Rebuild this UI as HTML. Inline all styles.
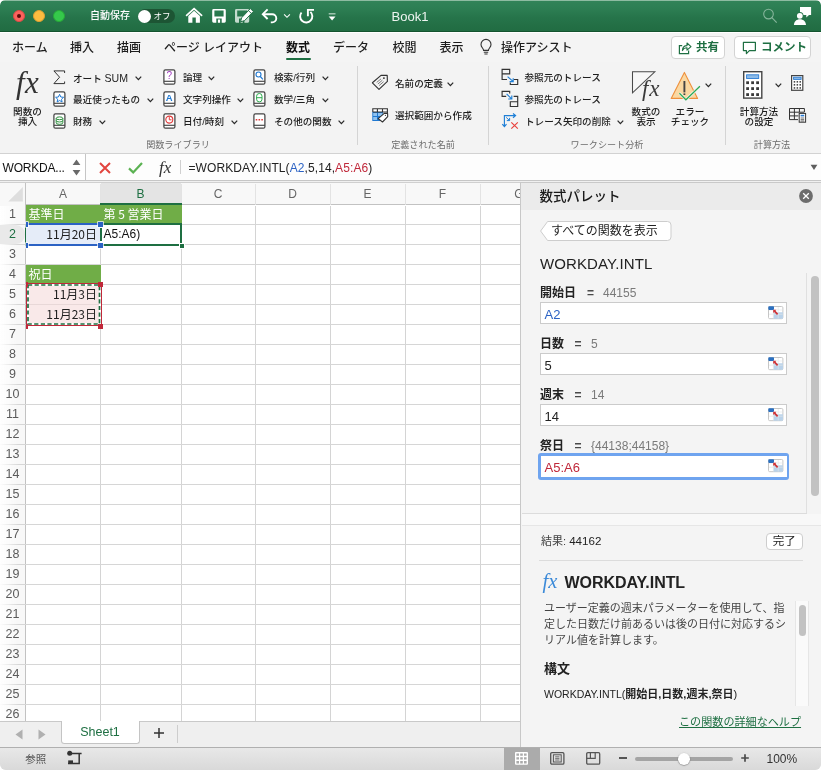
<!DOCTYPE html>
<html lang="ja"><head><meta charset="utf-8"><title>Book1</title>
<style>
*{box-sizing:border-box;margin:0;padding:0}
html{background:#fff}html,body{width:821px;height:770px;overflow:hidden}body{background:#f2f2f2;border-radius:5px 5px 6px 6px}
body{font-family:"Liberation Sans","Noto Sans CJK JP",sans-serif;color:#222;position:relative;font-size:12px}
.abs{position:absolute}
.t{position:absolute;white-space:nowrap;line-height:1}
svg{position:absolute;overflow:visible}
/* title bar */
#title{left:0;top:0;width:821px;height:32px;background:linear-gradient(#8dbba1 0,#8dbba1 1px,#318358 1px,#2c7d52 30%,#26744a 55%,#216c42 96%,#14532f 97%,#14532f 100%);border-radius:5px 5px 0 0}
.tl{position:absolute;top:10px;width:12px;height:12px;border-radius:50%}
#tabs{left:0;top:32px;width:821px;height:30px;background:#f4f4f4;border-top:1px solid #fff}
.tab{font-size:12px;color:#1e1e1e;top:41.5px;font-weight:500}
#ribbon{left:0;top:62px;width:821px;height:92px;background:#f3f3f3;border-bottom:1px solid #d2d2d2}
.rl{font-size:9.6px;color:#1e1e1e;font-weight:500}
.gl{font-size:9.1px;color:#6c6c6c;top:140.6px}
.sep{position:absolute;top:66px;width:1px;height:79px;background:#d4d4d4}
</style></head><body><div id="w" style="position:absolute;left:0;top:0;width:821px;height:770px;will-change:transform">
<div id="title" class="abs">
<div class="tl" style="left:13px;background:#fc625d;border:0.5px solid #dd4a45"></div>
<div class="abs" style="left:17px;top:14px;width:4px;height:4px;border-radius:50%;background:#5c0a0a"></div>
<div class="tl" style="left:33px;background:#fdbc40;border:0.5px solid #dea032"></div>
<div class="tl" style="left:53px;background:#35c84b;border:0.5px solid #27a938"></div>
<div class="t" style="left:90px;top:11px;font-size:10px;color:#fff;font-weight:500">自動保存</div>
<div class="abs" style="left:138px;top:9px;width:37px;height:14px;border-radius:7px;background:#1d5534"></div>
<div class="abs" style="left:138px;top:9.5px;width:13px;height:13px;border-radius:50%;background:#fff"></div>
<div class="t" style="left:153.5px;top:12px;font-size:8.5px;color:#fff">オフ</div>
<svg style="left:180px;top:2px" width="160" height="28" viewBox="180 2 160 28">
<path d="M186.6 15.4 L194.1 8.6 L201.6 15.4" fill="none" stroke="#fff" stroke-width="1.7" stroke-linecap="round" stroke-linejoin="miter"/>
<path d="M188.3 15.9 L194.1 10.7 L199.9 15.9 V22.7 H195.8 V17.6 H192.4 V22.7 H188.3 Z" fill="#fff"/>
<path d="M213.6 9 H224.4 A1.4 1.4 0 0 1 225.8 10.4 V21.3 A1.4 1.4 0 0 1 224.4 22.7 H213.6 A1.4 1.4 0 0 1 212.2 21.3 V10.4 A1.4 1.4 0 0 1 213.6 9 Z M214.4 10.6 V16.6 H223.6 V10.6 Z M216.3 18.4 V22.7 H217.9 V19.6 H220.1 V22.7 H221.7 V18.4 Z" fill="#fff" fill-rule="evenodd"/>
<path d="M236.4 9 H247.8 A1.4 1.4 0 0 1 249.2 10.4 V21.3 A1.4 1.4 0 0 1 247.8 22.7 H236.4 A1.4 1.4 0 0 1 235 21.3 V10.4 A1.4 1.4 0 0 1 236.4 9 Z M237.2 10.6 V16.6 H247 V10.6 Z M239 18.4 V22.7 H240.6 V19.6 H242.8 V22.7 H244.4 V18.4 Z" fill="#c3dacd" fill-rule="evenodd"/>
<path d="M250.3 8.6 L253.4 11.4 L244.6 20.6 L240.6 21.8 L241.6 17.8 Z" fill="#fff" stroke="#24734a" stroke-width="1"/>
<path d="M248.6 10.8 L251.4 13.4" stroke="#24734a" stroke-width="0.9"/>
<path d="M267.6 9.4 L262.8 14.2 L267.6 19" fill="none" stroke="#fff" stroke-width="1.9"/>
<path d="M263 14.2 H272.2 A4.1 4.1 0 0 1 272.2 22.4 H270.8" fill="none" stroke="#fff" stroke-width="1.9"/>
<path d="M284.1 14.4 L287 17.3 L289.9 14.4" fill="none" stroke="#fff" stroke-width="1.1"/>
<path d="M301.5 12.5 A6.1 6.1 0 1 0 310.4 11.9" fill="none" stroke="#fff" stroke-width="1.9"/>
<path d="M314 9.9 H307.9 V16.2" fill="none" stroke="#fff" stroke-width="1.9"/>
<rect x="328.7" y="13.1" width="6.8" height="1.4" fill="#a9cbb8"/>
<path d="M328.7 16.4 H335.5 L332.1 20.5 Z" fill="#fff"/>
</svg>
<div class="t" style="left:360px;width:100px;text-align:center;top:10px;font-size:13px;color:#eef4f0">Book1</div>
<svg style="left:760px;top:4px" width="60" height="26" viewBox="760 4 60 26"><circle cx="768.5" cy="14.1" r="4.8" fill="none" stroke="#86b59b" stroke-width="1.1"/><path d="M771.9 17.6 L776.7 22.6" stroke="#86b59b" stroke-width="1.1"/><path d="M800 7 H811.1 V14.9 H809 L806.3 17.6 V14.9 H800 Z" fill="#fff"/><circle cx="799.8" cy="15.8" r="3.7" fill="#26744a"/><circle cx="799.8" cy="15.8" r="2.9" fill="#fff"/><path d="M793.9 25 C794.2 21.4 796.6 19.3 799.9 19.3 C803.2 19.3 805.7 21.4 806 25 Z" fill="#fff"/></svg>
</div>
<div id="tabs" class="abs"></div>
<div class="t tab" style="left:12px">ホーム</div>
<div class="t tab" style="left:70px">挿入</div>
<div class="t tab" style="left:117px">描画</div>
<div class="t tab" style="left:164px">ページ レイアウト</div>
<div class="t tab" style="left:286px;color:#111;font-weight:700">数式</div>
<div class="abs" style="left:286px;top:57.5px;width:25px;height:2.5px;border-radius:1px;background:#1e6f42"></div>
<div class="t tab" style="left:333px">データ</div>
<div class="t tab" style="left:392.5px">校閲</div>
<div class="t tab" style="left:439.5px">表示</div>
<svg style="left:478px;top:38px" width="16" height="18" viewBox="0 0 16 18"><path d="M5.6 12.4 C5.6 10.4 3 9.4 3 6.4 A5 5 0 0 1 13 6.4 C13 9.4 10.4 10.4 10.4 12.4 Z" fill="none" stroke="#333" stroke-width="1.1"/><path d="M5.8 14.2 H10.2 M6.4 16 H9.6" stroke="#333" stroke-width="1.1"/></svg>
<div class="t tab" style="left:501px">操作アシスト</div>
<div class="abs" style="left:670.5px;top:36px;width:54.5px;height:23px;border:1px solid #d3d3d3;border-radius:4px;background:#fff"></div>
<div class="abs" style="left:734px;top:36px;width:77px;height:23px;border:1px solid #d3d3d3;border-radius:4px;background:#fff"></div>
<svg style="left:678px;top:41px" width="14" height="14" viewBox="0 0 14 14"><path d="M4.2 4.6 H1.4 V12.6 H10.6 V9.6" fill="none" stroke="#1e6f42" stroke-width="1.2"/><path d="M4.4 9.6 C4.6 6.4 6.4 4.6 9 4.6 V2 L13 5.6 L9 9.2 V6.8 C7 6.8 5.4 7.6 4.4 9.6 Z" fill="none" stroke="#1e6f42" stroke-width="1.1" stroke-linejoin="round"/></svg>
<div class="t" style="left:696px;top:42px;font-size:11.5px;color:#1e6f42;font-weight:700">共有</div>
<svg style="left:742px;top:41px" width="15" height="14" viewBox="0 0 15 14"><path d="M1.4 1.4 H13.4 V9.6 H7.4 L4.4 12.6 V9.6 H1.4 Z" fill="none" stroke="#1e6f42" stroke-width="1.2" stroke-linejoin="round"/></svg>
<div class="t" style="left:761px;top:42px;font-size:11.5px;color:#1e6f42;font-weight:700">コメント</div>
<div id="ribbon" class="abs"></div>
<!--RIBBON-->
<div class="t" style="left:16px;top:67px;font-family:'Liberation Serif',serif;font-style:italic;font-size:31px;color:#333;letter-spacing:0.5px">fx</div>
<div class="t rl" style="left:0;width:55px;text-align:center;top:107px">関数の</div>
<div class="t rl" style="left:0;width:55px;text-align:center;top:117px">挿入</div>
<svg style="left:53px;top:70px" width="13" height="15" viewBox="0 0 13 15"><path d="M11.6 3 V0.9 H0.9 L6.6 7.2 L0.9 13.6 H11.6 V11.5" fill="none" stroke="#333" stroke-width="1"/></svg>
<div class="t rl" style="left:73px;top:73.4px">オート <span style="font-size:10.6px">SUM</span></div><svg style="left:134.5px;top:75.8px" width="7" height="5" viewBox="0 0 7 5"><path d="M0.6 0.6 L3.4 3.6 L6.2 0.6" fill="none" stroke="#2b2b2b" stroke-width="1.25"/></svg>
<svg style="left:52.8px;top:91px" width="13" height="16" viewBox="0 0 13 16"><rect x="0.9" y="0.9" width="11" height="14.3" rx="1.5" fill="#fff" stroke="#444" stroke-width="1.25"/><path d="M0.9 12.3 H11.9" stroke="#444" stroke-width="1.15"/><g transform="translate(0.3 0.5)"><path d="M6.3 2.8 L7.5 5.5 L10.3 5.8 L8.2 7.7 L8.8 10.5 L6.3 9 L3.8 10.5 L4.4 7.7 L2.3 5.8 L5.1 5.5 Z" fill="none" stroke="#1f78d1" stroke-width="1"/></g></svg>
<div class="t rl" style="left:73px;top:95.3px">最近使ったもの</div><svg style="left:146.5px;top:97.6px" width="7" height="5" viewBox="0 0 7 5"><path d="M0.6 0.6 L3.4 3.6 L6.2 0.6" fill="none" stroke="#2b2b2b" stroke-width="1.25"/></svg>
<svg style="left:52.8px;top:113px" width="13" height="16" viewBox="0 0 13 16"><rect x="0.9" y="0.9" width="11" height="14.3" rx="1.5" fill="#fff" stroke="#444" stroke-width="1.25"/><path d="M0.9 12.3 H11.9" stroke="#444" stroke-width="1.15"/><g transform="translate(0.3 0.5)"><ellipse cx="6.2" cy="4.8" rx="3.3" ry="1.4" fill="none" stroke="#2e8f3e" stroke-width="1"/><path d="M2.9 4.8 V9.4 A3.3 1.4 0 0 0 9.5 9.4 V4.8 M2.9 7.1 A3.3 1.4 0 0 0 9.5 7.1" fill="none" stroke="#2e8f3e" stroke-width="1"/></g></svg>
<div class="t rl" style="left:73px;top:117.2px">財務</div><svg style="left:98.5px;top:119.5px" width="7" height="5" viewBox="0 0 7 5"><path d="M0.6 0.6 L3.4 3.6 L6.2 0.6" fill="none" stroke="#2b2b2b" stroke-width="1.25"/></svg>
<svg style="left:162.8px;top:69px" width="13" height="16" viewBox="0 0 13 16"><rect x="0.9" y="0.9" width="11" height="14.3" rx="1.5" fill="#fff" stroke="#444" stroke-width="1.25"/><path d="M0.9 12.3 H11.9" stroke="#444" stroke-width="1.15"/><g transform="translate(0.3 0.5)"><text x="6" y="9.8" font-size="10" text-anchor="middle" fill="#a03cc0" font-family="Liberation Sans,sans-serif">?</text></g></svg>
<div class="t rl" style="left:183px;top:73.4px">論理</div><svg style="left:207.7px;top:75.6px" width="7" height="5" viewBox="0 0 7 5"><path d="M0.6 0.6 L3.4 3.6 L6.2 0.6" fill="none" stroke="#2b2b2b" stroke-width="1.25"/></svg>
<svg style="left:162.8px;top:91px" width="13" height="16" viewBox="0 0 13 16"><rect x="0.9" y="0.9" width="11" height="14.3" rx="1.5" fill="#fff" stroke="#444" stroke-width="1.25"/><path d="M0.9 12.3 H11.9" stroke="#444" stroke-width="1.15"/><g transform="translate(0.3 0.5)"><text x="6" y="9.6" font-size="9.5" text-anchor="middle" fill="#1f78d1" font-family="Liberation Sans,sans-serif" font-weight="bold">A</text></g></svg>
<div class="t rl" style="left:183px;top:95.3px">文字列操作</div><svg style="left:237px;top:97.6px" width="7" height="5" viewBox="0 0 7 5"><path d="M0.6 0.6 L3.4 3.6 L6.2 0.6" fill="none" stroke="#2b2b2b" stroke-width="1.25"/></svg>
<svg style="left:162.8px;top:113px" width="13" height="16" viewBox="0 0 13 16"><rect x="0.9" y="0.9" width="11" height="14.3" rx="1.5" fill="#fff" stroke="#444" stroke-width="1.25"/><path d="M0.9 12.3 H11.9" stroke="#444" stroke-width="1.15"/><g transform="translate(0.3 0.5)"><circle cx="6" cy="6.1" r="3.5" fill="none" stroke="#e03a3a" stroke-width="1.1"/><path d="M6 3.6 V6.3 H8.2" fill="none" stroke="#e03a3a" stroke-width="1"/></g></svg>
<div class="t rl" style="left:183px;top:117.2px">日付/時刻</div><svg style="left:230.5px;top:119.5px" width="7" height="5" viewBox="0 0 7 5"><path d="M0.6 0.6 L3.4 3.6 L6.2 0.6" fill="none" stroke="#2b2b2b" stroke-width="1.25"/></svg>
<svg style="left:253.3px;top:69px" width="13" height="16" viewBox="0 0 13 16"><rect x="0.9" y="0.9" width="11" height="14.3" rx="1.5" fill="#fff" stroke="#444" stroke-width="1.25"/><path d="M0.9 12.3 H11.9" stroke="#444" stroke-width="1.15"/><g transform="translate(0.3 0.5)"><circle cx="5.2" cy="5" r="2.5" fill="none" stroke="#1f78d1" stroke-width="1.1"/><path d="M7 7 L9.6 9.8" stroke="#1f78d1" stroke-width="1.2"/></g></svg>
<div class="t rl" style="left:274px;top:73.4px">検索/行列</div><svg style="left:321.5px;top:75.8px" width="7" height="5" viewBox="0 0 7 5"><path d="M0.6 0.6 L3.4 3.6 L6.2 0.6" fill="none" stroke="#2b2b2b" stroke-width="1.25"/></svg>
<svg style="left:253.3px;top:91px" width="13" height="16" viewBox="0 0 13 16"><rect x="0.9" y="0.9" width="11" height="14.3" rx="1.5" fill="#fff" stroke="#444" stroke-width="1.25"/><path d="M0.9 12.3 H11.9" stroke="#444" stroke-width="1.15"/><g transform="translate(0.3 0.5)"><rect x="3.3" y="2" width="5.4" height="8.4" rx="2.7" fill="none" stroke="#2eab4e" stroke-width="1"/><path d="M3.3 6.2 H8.7" stroke="#2eab4e" stroke-width="1"/></g></svg>
<div class="t rl" style="left:274px;top:95.3px">数学/三角</div><svg style="left:321.5px;top:97.6px" width="7" height="5" viewBox="0 0 7 5"><path d="M0.6 0.6 L3.4 3.6 L6.2 0.6" fill="none" stroke="#2b2b2b" stroke-width="1.25"/></svg>
<svg style="left:253.3px;top:113px" width="13" height="16" viewBox="0 0 13 16"><rect x="0.9" y="0.9" width="11" height="14.3" rx="1.5" fill="#fff" stroke="#444" stroke-width="1.25"/><path d="M0.9 12.3 H11.9" stroke="#444" stroke-width="1.15"/><g transform="translate(0.3 0.5)"><path d="M2.4 6.2 H4 M5.2 6.2 H6.8 M8 6.2 H9.6" stroke="#e03a3a" stroke-width="1.4"/></g></svg>
<div class="t rl" style="left:274px;top:117.2px">その他の関数</div><svg style="left:337.5px;top:119.5px" width="7" height="5" viewBox="0 0 7 5"><path d="M0.6 0.6 L3.4 3.6 L6.2 0.6" fill="none" stroke="#2b2b2b" stroke-width="1.25"/></svg>
<div class="t gl" style="left:128px;width:100px;text-align:center">関数ライブラリ</div>
<div class="sep" style="left:357px"></div>
<svg style="left:370px;top:72px" width="20" height="20" viewBox="370 72 20 20"><path d="M372.4 82.8 L381 75.4 L387.2 75.3 L387.4 81.4 L379 89.4 Z" fill="none" stroke="#333" stroke-width="1.15" stroke-linejoin="round"/><circle cx="383.9" cy="78.1" r="0.95" fill="#333"/><path d="M376.7 82.4 L381 78.9 M377.9 84 L382.4 80.2 M379.1 85.6 L383.6 81.7" stroke="#555" stroke-width="0.75"/></svg>
<div class="t rl" style="left:395px;top:79.2px">名前の定義</div><svg style="left:447.3px;top:81.6px" width="7" height="5" viewBox="0 0 7 5"><path d="M0.6 0.6 L3.4 3.6 L6.2 0.6" fill="none" stroke="#2b2b2b" stroke-width="1.25"/></svg>
<svg style="left:370px;top:106px" width="20" height="18" viewBox="370 106 20 18"><rect x="372.3" y="112" width="10.6" height="9" fill="#1f78d1"/><path d="M373.2 112.9 H377 V115.9 H373.2 Z M378 112.9 H382.4 V115.9 H378 Z M373.2 116.9 H377 V120.1 H373.2 Z" fill="#8fc2ef"/><rect x="372.8" y="108.7" width="14.6" height="3.3" fill="#fff"/><path d="M372.8 112 V108.7 H387.4 V114.6 M372.8 112 H387.4 M377.4 108.7 V112 M382.5 108.7 V112" fill="none" stroke="#333" stroke-width="1.1"/><path d="M378.2 118.6 L384.5 113.2 L387.6 113.5 L387.7 116.7 L382.5 122 Z" fill="#fff" stroke="#333" stroke-width="1.1" stroke-linejoin="round"/><circle cx="385.4" cy="115.3" r="0.6" fill="#333"/></svg>
<div class="t rl" style="left:395px;top:111.2px">選択範囲から作成</div>
<div class="t gl" style="left:373px;width:100px;text-align:center">定義された名前</div>
<div class="sep" style="left:488px"></div>
<svg style="left:500px;top:66px" width="20" height="66" viewBox="500 66 20 66"><g fill="none" stroke="#333" stroke-width="1.15"><path d="M507 79.5 H502.1 V69.3 H509.7 V73.8 H502.1"/><path d="M513.8 79.5 H517.7 V84.5 H510.3 V82.6"/><path d="M506.2 96.3 H502.1 V91.3 H509.7 V93.6"/><path d="M513.6 96.3 H517.7 V106.5 H510.3 V101.7 H517.7"/></g><g fill="none" stroke="#1f7fd6" stroke-width="1.15"><path d="M507.6 76.6 L513 81.4 M513.2 78.2 V81.6 H509.6"/><path d="M506.6 93.8 L511.6 98.8 M511.8 95.6 V99 H508.2"/><path d="M504.4 126.4 V115.6 H515.4 M502.3 124.2 L504.4 126.7 L506.5 124.2 M513 113.5 L515.6 115.6 L513 117.7"/><path d="M506.2 117.4 L509.4 120.4 M509.6 117.9 V120.6 H506.8" stroke-width="1"/></g><path d="M511.3 122.3 L517.8 128.7 M517.8 122.3 L511.3 128.7" stroke="#e8413c" stroke-width="1.15"/></svg>
<div class="t rl" style="left:524.5px;top:73.4px">参照元のトレース</div>
<div class="t rl" style="left:524.5px;top:95.3px">参照先のトレース</div>
<div class="t rl" style="left:525px;top:117.2px">トレース矢印の削除</div><svg style="left:617.3px;top:119.5px" width="7" height="5" viewBox="0 0 7 5"><path d="M0.6 0.6 L3.4 3.6 L6.2 0.6" fill="none" stroke="#2b2b2b" stroke-width="1.25"/></svg>
<svg style="left:630px;top:70px" width="28" height="26" viewBox="630 70 28 26"><path d="M632.5 71.8 H654.8 L632.5 92.8 Z" fill="#f7f7f7" stroke="#4a4a4a" stroke-width="1.05" stroke-linejoin="miter"/></svg>
<div class="t" style="left:642px;top:77px;font-family:'Liberation Serif',serif;font-style:italic;font-size:23px;color:#3a3a3a;letter-spacing:0.8px">fx</div>
<div class="t rl" style="left:616px;width:60px;text-align:center;top:106.5px">数式の</div>
<div class="t rl" style="left:616px;width:60px;text-align:center;top:117.3px">表示</div>
<svg style="left:668px;top:69px" width="34" height="33" viewBox="668 69 34 33"><path d="M684.4 72.4 L697.6 98.4 H671.2 Z" fill="#fad8a2" stroke="#ee903c" stroke-width="1.1" stroke-linejoin="round"/><path d="M684.4 81 V92.4" stroke="#444" stroke-width="1.9"/><rect x="683.5" y="93.4" width="1.8" height="1.6" fill="#444"/><path d="M679.4 93.2 L685.9 99.8 L699.9 86.3" fill="none" stroke="#f3f3f3" stroke-width="2.6"/><path d="M679.4 93.2 L685.9 99.8 L699.9 86.3" fill="none" stroke="#2eaa55" stroke-width="1.25"/></svg>
<svg style="left:705.4px;top:83px" width="7" height="5" viewBox="0 0 7 5"><path d="M0.6 0.6 L3.4 3.6 L6.2 0.6" fill="none" stroke="#2b2b2b" stroke-width="1.25"/></svg>
<div class="t rl" style="left:660px;width:60px;text-align:center;top:106.5px">エラー</div>
<div class="t rl" style="left:660px;width:60px;text-align:center;top:117.3px">チェック</div>
<div class="t gl" style="left:557px;width:100px;text-align:center">ワークシート分析</div>
<div class="sep" style="left:725px"></div>
<svg style="left:743.3px;top:70.9px" width="19.5" height="27.8" viewBox="0 0 19.5 27.8"><rect x="0.7" y="0.7" width="18.10" height="26.40" fill="#fff" stroke="#444" stroke-width="1.4"/><rect x="3.60" y="3.80" width="12.10" height="3.70" fill="#8dbbe8" stroke="#2b7cd3" stroke-width="0.9"/><rect x="3.20" y="10.30" width="2.8" height="2.8" fill="#3a3a3a"/><rect x="8.20" y="10.30" width="2.8" height="2.8" fill="#3a3a3a"/><rect x="13.20" y="10.30" width="2.8" height="2.8" fill="#3a3a3a"/><rect x="3.20" y="16.20" width="2.8" height="2.8" fill="#3a3a3a"/><rect x="8.20" y="16.20" width="2.8" height="2.8" fill="#3a3a3a"/><rect x="13.20" y="16.20" width="2.8" height="2.8" fill="#3a3a3a"/><rect x="3.20" y="22.20" width="2.8" height="2.8" fill="#3a3a3a"/><rect x="8.20" y="22.20" width="2.8" height="2.8" fill="#3a3a3a"/><rect x="13.20" y="22.20" width="2.8" height="2.8" fill="#3a3a3a"/></svg>
<svg style="left:774.5px;top:83px" width="7" height="5" viewBox="0 0 7 5"><path d="M0.6 0.6 L3.4 3.6 L6.2 0.6" fill="none" stroke="#2b2b2b" stroke-width="1.25"/></svg>
<div class="t rl" style="left:729px;width:60px;text-align:center;top:106.5px">計算方法</div>
<div class="t rl" style="left:729px;width:60px;text-align:center;top:117.3px">の設定</div>
<svg style="left:791.3px;top:75px" width="12.4" height="15.9" viewBox="0 0 12.4 15.9"><rect x="0.6" y="0.6" width="11.20" height="14.70" fill="#fff" stroke="#444" stroke-width="1.2"/><rect x="2.60" y="2.20" width="7.50" height="2.20" fill="#8dbbe8" stroke="#2b7cd3" stroke-width="0.9"/><rect x="2.70" y="6.10" width="1.5" height="1.5" fill="#3a3a3a"/><rect x="5.60" y="6.10" width="1.5" height="1.5" fill="#3a3a3a"/><rect x="8.50" y="6.10" width="1.5" height="1.5" fill="#3a3a3a"/><rect x="2.70" y="9.10" width="1.5" height="1.5" fill="#3a3a3a"/><rect x="5.60" y="9.10" width="1.5" height="1.5" fill="#3a3a3a"/><rect x="8.50" y="9.10" width="1.5" height="1.5" fill="#3a3a3a"/><rect x="2.70" y="12.20" width="1.5" height="1.5" fill="#3a3a3a"/><rect x="5.60" y="12.20" width="1.5" height="1.5" fill="#3a3a3a"/><rect x="8.50" y="12.20" width="1.5" height="1.5" fill="#3a3a3a"/></svg>
<svg style="left:789px;top:108px" width="18" height="15" viewBox="0 0 18 15"><path d="M0.5 0.5 H15.4 V4 M0.5 0.5 V11.6 H9 M0.5 4.2 H15.4 M0.5 7.9 H9.4 M5.4 0.5 V11.6 M10.4 0.5 V4.2" fill="none" stroke="#333" stroke-width="1"/><rect x="10.2" y="5.4" width="6.4" height="8.8" fill="#fff" stroke="#333" stroke-width="1"/><rect x="11.6" y="6.8" width="3.6" height="1.6" fill="#2b7cd3"/><path d="M11.6 10 H15.2 M11.6 11.6 H15.2 M11.6 13 H15.2" stroke="#333" stroke-width="0.7"/></svg>
<div class="t gl" style="left:722px;width:100px;text-align:center">計算方法</div>
<!--/RIBBON-->
<!--GRID-->
<div class="abs" style="left:0;top:154px;width:821px;height:27px;background:#fdfdfd;border-bottom:1px solid #c6c6c6"></div>
<div class="abs" style="left:0;top:154px;width:86px;height:26px;background:#fff;border-right:1px solid #c6c6c6"></div>
<div class="t" style="left:2.5px;top:162px;font-size:12px;letter-spacing:-0.2px;color:#111">WORKDA...</div>
<svg style="left:72px;top:159px" width="9" height="17" viewBox="0 0 9 17"><path d="M0.6 6 L4.5 0.4 L8.4 6 Z M0.6 11 L4.5 16.6 L8.4 11 Z" fill="#6a6a6a"/></svg>
<svg style="left:99px;top:162px" width="12" height="12" viewBox="0 0 12 12"><path d="M1 1 L11 11 M11 1 L1 11" stroke="#e2453f" stroke-width="2"/></svg>
<svg style="left:127.5px;top:162px" width="15" height="12" viewBox="0 0 15 12"><path d="M1 6.4 L5.2 10.4 L14 1" fill="none" stroke="#5bb252" stroke-width="2.2"/></svg>
<div class="t" style="left:159px;top:158.5px;font-family:'Liberation Serif',serif;font-style:italic;font-size:17px;color:#333">fx</div>
<div class="abs" style="left:180px;top:160px;width:1px;height:14px;background:#d0d0d0"></div>
<div class="t" style="left:188.5px;top:162px;font-size:12px;letter-spacing:0.09px;color:#222">=WORKDAY.INTL(<span style="color:#2b62c4">A2</span>,5,14,<span style="color:#c0283a">A5:A6</span>)</div>
<svg style="left:809.5px;top:164px" width="8" height="7" viewBox="0 0 8 7"><path d="M0.6 0.7 H7.4 L4 6 Z" fill="#5e5e5e"/></svg>
<div class="abs" style="left:0;top:181px;width:821px;height:2px;background:#f0f0f0;border-bottom:1px solid #d0d0d0"></div>
<div class="abs" style="left:0;top:183px;width:521px;height:538px;background:#fff;overflow:hidden" id="grid">
<div class="abs" style="left:0;top:0;width:521px;height:22px;background:#f8f8f8;border-bottom:1px solid #c2c2c2"></div>
<div class="abs" style="left:0;top:0;width:26px;height:538px;background:#f8f8f8;border-right:1px solid #c2c2c2"></div>
<svg style="left:8px;top:4px" width="15" height="15" viewBox="0 0 15 15"><path d="M14.9 0 V14.6 H0.3 Z" fill="#dedede"/></svg>
<div class="abs" style="left:101px;top:0;width:80px;height:21px;background:#e4e4e4"></div>
<div class="t" style="left:26px;width:74px;text-align:center;top:4.5px;font-size:12px;color:#666">A</div>
<div class="t" style="left:100px;width:81px;text-align:center;top:4.5px;font-size:12px;color:#1e6f42">B</div>
<div class="abs" style="left:100px;top:23px;width:1px;height:515px;background:#d4d4d4"></div>
<div class="abs" style="left:100px;top:1px;width:1px;height:21px;background:#e3e3e3"></div>
<div class="t" style="left:181px;width:74px;text-align:center;top:4.5px;font-size:12px;color:#666">C</div>
<div class="abs" style="left:181px;top:23px;width:1px;height:515px;background:#d4d4d4"></div>
<div class="abs" style="left:181px;top:1px;width:1px;height:21px;background:#e3e3e3"></div>
<div class="t" style="left:255px;width:75px;text-align:center;top:4.5px;font-size:12px;color:#666">D</div>
<div class="abs" style="left:255px;top:23px;width:1px;height:515px;background:#d4d4d4"></div>
<div class="abs" style="left:255px;top:1px;width:1px;height:21px;background:#e3e3e3"></div>
<div class="t" style="left:330px;width:75px;text-align:center;top:4.5px;font-size:12px;color:#666">E</div>
<div class="abs" style="left:330px;top:23px;width:1px;height:515px;background:#d4d4d4"></div>
<div class="abs" style="left:330px;top:1px;width:1px;height:21px;background:#e3e3e3"></div>
<div class="t" style="left:405px;width:75px;text-align:center;top:4.5px;font-size:12px;color:#666">F</div>
<div class="abs" style="left:405px;top:23px;width:1px;height:515px;background:#d4d4d4"></div>
<div class="abs" style="left:405px;top:1px;width:1px;height:21px;background:#e3e3e3"></div>
<div class="t" style="left:481.5px;width:75px;text-align:center;top:4.5px;font-size:12px;color:#666">G</div>
<div class="abs" style="left:480px;top:23px;width:1px;height:515px;background:#d4d4d4"></div>
<div class="abs" style="left:480px;top:1px;width:1px;height:21px;background:#e3e3e3"></div>
<div class="abs" style="left:0;top:41px;width:521px;height:1px;background:#d6d6d6"></div>
<div class="abs" style="left:0;top:61px;width:521px;height:1px;background:#d6d6d6"></div>
<div class="abs" style="left:0;top:81px;width:521px;height:1px;background:#d6d6d6"></div>
<div class="abs" style="left:0;top:101px;width:521px;height:1px;background:#d6d6d6"></div>
<div class="abs" style="left:0;top:121px;width:521px;height:1px;background:#d6d6d6"></div>
<div class="abs" style="left:0;top:141px;width:521px;height:1px;background:#d6d6d6"></div>
<div class="abs" style="left:0;top:161px;width:521px;height:1px;background:#d6d6d6"></div>
<div class="abs" style="left:0;top:181px;width:521px;height:1px;background:#d6d6d6"></div>
<div class="abs" style="left:0;top:201px;width:521px;height:1px;background:#d6d6d6"></div>
<div class="abs" style="left:0;top:221px;width:521px;height:1px;background:#d6d6d6"></div>
<div class="abs" style="left:0;top:241px;width:521px;height:1px;background:#d6d6d6"></div>
<div class="abs" style="left:0;top:261px;width:521px;height:1px;background:#d6d6d6"></div>
<div class="abs" style="left:0;top:281px;width:521px;height:1px;background:#d6d6d6"></div>
<div class="abs" style="left:0;top:301px;width:521px;height:1px;background:#d6d6d6"></div>
<div class="abs" style="left:0;top:321px;width:521px;height:1px;background:#d6d6d6"></div>
<div class="abs" style="left:0;top:341px;width:521px;height:1px;background:#d6d6d6"></div>
<div class="abs" style="left:0;top:361px;width:521px;height:1px;background:#d6d6d6"></div>
<div class="abs" style="left:0;top:381px;width:521px;height:1px;background:#d6d6d6"></div>
<div class="abs" style="left:0;top:401px;width:521px;height:1px;background:#d6d6d6"></div>
<div class="abs" style="left:0;top:421px;width:521px;height:1px;background:#d6d6d6"></div>
<div class="abs" style="left:0;top:441px;width:521px;height:1px;background:#d6d6d6"></div>
<div class="abs" style="left:0;top:461px;width:521px;height:1px;background:#d6d6d6"></div>
<div class="abs" style="left:0;top:481px;width:521px;height:1px;background:#d6d6d6"></div>
<div class="abs" style="left:0;top:501px;width:521px;height:1px;background:#d6d6d6"></div>
<div class="abs" style="left:0;top:521px;width:521px;height:1px;background:#d6d6d6"></div>
<div class="abs" style="left:0;top:541px;width:521px;height:1px;background:#d6d6d6"></div>
<div class="abs" style="left:0;top:23px;width:25px;height:515px;background:linear-gradient(to right,rgba(255,255,255,.95),rgba(255,255,255,0) 75%)"></div>
<div class="abs" style="left:0;top:42px;width:25px;height:19px;background:#e9e9e9;border-radius:0 9px 9px 0"></div>
<div class="t" style="left:0;width:25px;text-align:center;top:24.8px;font-size:12.5px;color:#5a5a5a">1</div>
<div class="t" style="left:0;width:25px;text-align:center;top:44.8px;font-size:12.5px;color:#1e6f42">2</div>
<div class="t" style="left:0;width:25px;text-align:center;top:64.8px;font-size:12.5px;color:#5a5a5a">3</div>
<div class="t" style="left:0;width:25px;text-align:center;top:84.8px;font-size:12.5px;color:#5a5a5a">4</div>
<div class="t" style="left:0;width:25px;text-align:center;top:104.8px;font-size:12.5px;color:#5a5a5a">5</div>
<div class="t" style="left:0;width:25px;text-align:center;top:124.8px;font-size:12.5px;color:#5a5a5a">6</div>
<div class="t" style="left:0;width:25px;text-align:center;top:144.8px;font-size:12.5px;color:#5a5a5a">7</div>
<div class="t" style="left:0;width:25px;text-align:center;top:164.8px;font-size:12.5px;color:#5a5a5a">8</div>
<div class="t" style="left:0;width:25px;text-align:center;top:184.8px;font-size:12.5px;color:#5a5a5a">9</div>
<div class="t" style="left:0;width:25px;text-align:center;top:204.8px;font-size:12.5px;color:#5a5a5a">10</div>
<div class="t" style="left:0;width:25px;text-align:center;top:224.8px;font-size:12.5px;color:#5a5a5a">11</div>
<div class="t" style="left:0;width:25px;text-align:center;top:244.8px;font-size:12.5px;color:#5a5a5a">12</div>
<div class="t" style="left:0;width:25px;text-align:center;top:264.8px;font-size:12.5px;color:#5a5a5a">13</div>
<div class="t" style="left:0;width:25px;text-align:center;top:284.8px;font-size:12.5px;color:#5a5a5a">14</div>
<div class="t" style="left:0;width:25px;text-align:center;top:304.8px;font-size:12.5px;color:#5a5a5a">15</div>
<div class="t" style="left:0;width:25px;text-align:center;top:324.8px;font-size:12.5px;color:#5a5a5a">16</div>
<div class="t" style="left:0;width:25px;text-align:center;top:344.8px;font-size:12.5px;color:#5a5a5a">17</div>
<div class="t" style="left:0;width:25px;text-align:center;top:364.8px;font-size:12.5px;color:#5a5a5a">18</div>
<div class="t" style="left:0;width:25px;text-align:center;top:384.8px;font-size:12.5px;color:#5a5a5a">19</div>
<div class="t" style="left:0;width:25px;text-align:center;top:404.8px;font-size:12.5px;color:#5a5a5a">20</div>
<div class="t" style="left:0;width:25px;text-align:center;top:424.8px;font-size:12.5px;color:#5a5a5a">21</div>
<div class="t" style="left:0;width:25px;text-align:center;top:444.8px;font-size:12.5px;color:#5a5a5a">22</div>
<div class="t" style="left:0;width:25px;text-align:center;top:464.8px;font-size:12.5px;color:#5a5a5a">23</div>
<div class="t" style="left:0;width:25px;text-align:center;top:484.8px;font-size:12.5px;color:#5a5a5a">24</div>
<div class="t" style="left:0;width:25px;text-align:center;top:504.8px;font-size:12.5px;color:#5a5a5a">25</div>
<div class="t" style="left:0;width:25px;text-align:center;top:524.8px;font-size:12.5px;color:#5a5a5a">26</div>
<div class="abs" style="left:26px;top:22px;width:156px;height:19px;background:#70ad47"></div>
<div class="abs" style="left:100px;top:20px;width:82px;height:2px;background:#1e6f42"></div>
<div class="abs" style="left:26px;top:82px;width:75px;height:19px;background:#70ad47"></div>
<div class="t" style="left:28.5px;top:24.5px;font-family:'Noto Sans CJK JP',sans-serif;font-weight:400;font-size:12px;color:#fff">基準日</div>
<div class="t" style="left:103.5px;top:24.5px;font-family:'Noto Sans CJK JP',sans-serif;font-weight:400;font-size:12px;color:#fff">第 5 営業日</div>
<div class="t" style="left:28.5px;top:84.5px;font-family:'Noto Sans CJK JP',sans-serif;font-weight:400;font-size:12px;color:#fff">祝日</div>
<div class="abs" style="left:24.5px;top:40.5px;width:2px;height:22px;background:#1e6f42"></div>
<div class="abs" style="left:26px;top:40px;width:75px;height:23px;background:#e5ecf8;border:2px solid #2b62c4;border-right-width:1px;border-left-width:0"></div>
<div class="t" style="left:27px;width:70px;text-align:right;top:44.7px;font-family:'Noto Sans CJK JP',sans-serif;font-weight:400;font-size:12px;color:#222">11月20日</div>
<div class="abs" style="left:100px;top:40px;width:82px;height:23px;background:#fff;border:2px solid #1e6f42;border-left:0"></div>
<div class="abs" style="left:100.4px;top:45px;width:1.6px;height:13px;background:#1e6f42"></div>
<div class="abs" style="left:178.5px;top:59.5px;width:6px;height:6px;background:#1e6f42;border:1px solid #fff"></div>
<div class="t" style="left:103.5px;top:45px;font-size:12px;color:#111">A5:A6)</div>
<div class="abs" style="left:98px;top:38.7px;width:5px;height:5px;background:#2b62c4;box-shadow:0 0 0 0.7px #fff"></div>
<div class="abs" style="left:98px;top:59.7px;width:5px;height:5px;background:#2b62c4;box-shadow:0 0 0 0.7px #fff"></div>
<div class="abs" style="left:25.5px;top:38.7px;width:2.5px;height:5px;background:#2b62c4;box-shadow:0 0 0 0.7px #fff"></div>
<div class="abs" style="left:25.5px;top:59.7px;width:2.5px;height:5px;background:#2b62c4;box-shadow:0 0 0 0.7px #fff"></div>
<div class="abs" style="left:26px;top:100px;width:75.5px;height:43px;background:#fff;border:1px solid #c0283a"></div>
<div class="abs" style="left:29px;top:103px;width:69.5px;height:37px;background:#f9e9e9"></div>
<svg style="left:26px;top:100px" width="76" height="43" viewBox="0 0 76 43"><rect x="2" y="2" width="71.5" height="39" fill="none" stroke="#1e6f42" stroke-width="1.7" stroke-dasharray="4.2 2.4"/></svg>
<div class="abs" style="left:29px;top:121px;width:69.5px;height:1px;background:#e8d8d8"></div>
<div class="abs" style="left:98.3px;top:99px;width:5px;height:5px;background:#c0283a"></div>
<div class="abs" style="left:98.3px;top:140.5px;width:5px;height:5px;background:#c0283a"></div>
<div class="abs" style="left:25.5px;top:99px;width:2.5px;height:5px;background:#c0283a"></div>
<div class="abs" style="left:25.5px;top:140.5px;width:2.5px;height:5px;background:#c0283a"></div>
<div class="t" style="left:27px;width:70px;text-align:right;top:104.7px;font-family:'Noto Sans CJK JP',sans-serif;font-weight:400;font-size:12px;color:#222">11月3日</div>
<div class="t" style="left:27px;width:70px;text-align:right;top:124.7px;font-family:'Noto Sans CJK JP',sans-serif;font-weight:400;font-size:12px;color:#222">11月23日</div>
</div>
<div class="abs" style="left:0;top:721px;width:521px;height:26px;background:#efefef;border-top:1px solid #c9c9c9"></div>
<svg style="left:15px;top:729px" width="8" height="11" viewBox="0 0 8 11"><path d="M7.5 0.5 V10.5 L0.5 5.5 Z" fill="#b0b0b0"/></svg>
<svg style="left:37.5px;top:729px" width="8" height="11" viewBox="0 0 8 11"><path d="M0.5 0.5 V10.5 L7.5 5.5 Z" fill="#b0b0b0"/></svg>
<div class="abs" style="left:61px;top:721px;width:78.5px;height:23px;background:#fff;border:1px solid #c4c4c4;border-top:0;border-radius:0 0 3.5px 3.5px"></div>
<div class="t" style="left:61px;width:78px;text-align:center;top:726px;font-size:12.5px;color:#1e6f42">Sheet1</div>
<svg style="left:154px;top:728px" width="10" height="10" viewBox="0 0 10 10"><path d="M5 0 V10 M0 5 H10" stroke="#333" stroke-width="1.5"/></svg>
<div class="abs" style="left:177px;top:725px;width:1px;height:18px;background:#cdcdcd"></div>
<div class="abs" style="left:0;top:747px;width:821px;height:23px;background:linear-gradient(#e8e8e8,#d9d9d9);border-top:1px solid #b0b0b0"></div>
<div class="t" style="left:25.3px;top:754.4px;font-size:10.5px;color:#555">参照</div>
<svg style="left:67px;top:750px" width="16" height="16" viewBox="67 750 16 16"><circle cx="69.7" cy="753.3" r="2.5" fill="#333"/><path d="M71 753.6 H81.6 M79.2 753.6 V763.6 H68" fill="none" stroke="#333" stroke-width="1.5"/><rect x="68.2" y="760.4" width="4.8" height="3.6" fill="#333"/></svg>
<div class="abs" style="left:503.5px;top:748px;width:36.5px;height:22px;background:#ababab"></div>
<svg style="left:515px;top:752px" width="13" height="13" viewBox="0 0 13 13"><rect x="0" y="0" width="13" height="12.8" rx="1" fill="#fff"/><path d="M1.4 1.4 h2.6 v2.4 h-2.6 z M5.2 1.4 h2.6 v2.4 h-2.6 z M9 1.4 h2.6 v2.4 h-2.6 z M1.4 5.2 h2.6 v2.4 h-2.6 z M5.2 5.2 h2.6 v2.4 h-2.6 z M9 5.2 h2.6 v2.4 h-2.6 z M1.4 9 h2.6 v2.4 h-2.6 z M5.2 9 h2.6 v2.4 h-2.6 z M9 9 h2.6 v2.4 h-2.6 z" fill="#ababab"/></svg>
<svg style="left:550px;top:752px" width="15" height="13" viewBox="0 0 15 13"><rect x="0.7" y="0.7" width="13.2" height="11.4" rx="1.2" fill="none" stroke="#555" stroke-width="1.3"/><rect x="3.4" y="2.8" width="7.8" height="7.2" fill="none" stroke="#555" stroke-width="1"/><path d="M5.2 4.8 H9.4 M5.2 6.4 H9.4 M5.2 8 H9.4" stroke="#555" stroke-width="0.8"/></svg>
<svg style="left:586px;top:752px" width="15" height="13" viewBox="0 0 15 13"><rect x="0.7" y="0.7" width="13" height="11.4" rx="1.2" fill="none" stroke="#555" stroke-width="1.3"/><path d="M0.7 6.4 H9.2 V0.7 M4.4 0.7 V6.4" fill="none" stroke="#555" stroke-width="1.2"/></svg>
<div class="abs" style="left:618.8px;top:757.2px;width:8.4px;height:2.2px;background:#555"></div>
<div class="abs" style="left:635px;top:757px;width:98px;height:3.5px;border-radius:2px;background:#a4a4a4"></div>
<div class="abs" style="left:678.3px;top:753px;width:11.6px;height:11.6px;border-radius:50%;background:#fff;box-shadow:0 0.5px 1.2px rgba(0,0,0,.5)"></div>
<svg style="left:741.2px;top:754.4px" width="8" height="8" viewBox="0 0 8 8"><path d="M4 0.2 V7.8 M0.2 4 H7.8" stroke="#4a4a4a" stroke-width="1.7"/></svg>
<div class="t" style="left:766.5px;top:753px;font-size:12px;color:#333">100%</div>
<!--/GRID-->
<!--PANEL-->
<div class="abs" style="left:520px;top:182px;width:301px;height:565px;background:#f4f4f4;border-left:1px solid #c8c8c8;border-top:1px solid #c9c9c9"></div>
<div class="abs" style="left:521px;top:183px;width:300px;height:27px;background:#ebebeb"></div>
<div class="t" style="left:539.5px;top:189.5px;font-size:13.5px;font-weight:500;color:#1a1a1a">数式パレット</div>
<svg style="left:799px;top:189px" width="14" height="14" viewBox="0 0 14 14"><circle cx="7" cy="7" r="6.9" fill="#6c6c6c"/><path d="M4.2 4.2 L9.8 9.8 M9.8 4.2 L4.2 9.8" stroke="#fff" stroke-width="1.3"/></svg>
<svg style="left:539.6px;top:220.8px" width="132" height="20" viewBox="0 0 132 20"><path d="M7.6 0.5 H127.5 A3.5 3.5 0 0 1 131 4 V16 A3.5 3.5 0 0 1 127.5 19.5 H7.6 L0.6 10 Z" fill="#fff" stroke="#cdcdcd" stroke-width="1" stroke-linejoin="round"/></svg>
<div class="t" style="left:551px;top:225.3px;font-size:12px;color:#222">すべての関数を表示</div>
<div class="t" style="left:540px;top:255.7px;font-size:15px;color:#222;letter-spacing:0.1px">WORKDAY.INTL</div>
<div class="abs" style="left:806px;top:273px;width:1px;height:240px;background:#e0e0e0"></div>
<div class="abs" style="left:522px;top:513px;width:285px;height:1px;background:#dcdcdc"></div>
<div class="abs" style="left:522px;top:514px;width:299px;height:12px;background:#f8f8f8;border-bottom:1px solid #e6e6e6"></div>
<div class="abs" style="left:810.5px;top:276px;width:8px;height:220px;border-radius:4px;background:#c2c2c2"></div>
<div class="t" style="left:540px;top:286.5px;font-size:12px;font-weight:700;color:#222">開始日</div>
<div class="t" style="left:587px;top:286.5px;font-size:12px;font-weight:700;color:#4a4a4a">=</div>
<div class="t" style="left:603px;top:287.3px;font-size:12px;color:#7a7a7a">44155</div>
<div class="abs" style="left:540px;top:302px;width:247px;height:22px;background:#fff;border:1px solid #cbcbcb"></div>
<div class="t" style="left:544.5px;top:307.6px;font-size:13px;color:#2b62c4">A2</div>
<svg style="left:768.4px;top:306.3px" width="15.4" height="13.2" viewBox="0 0 15.4 13.2"><rect x="0.5" y="0.5" width="14.4" height="12.2" rx="1.2" fill="#fff" stroke="#c6c6c6" stroke-width="1"/><rect x="5.4" y="6.3" width="9.5" height="6.4" fill="#b9d2ea"/><path d="M5.4 1 V12.4 M10.2 1 V12.4 M1 4 H14.6 M1 8.2 H14.6" stroke="#e3e6ea" stroke-width="0.7"/><rect x="0.3" y="0.3" width="5.7" height="3.6" rx="0.8" fill="#2b70c0"/><path d="M6.4 4.9 L9.6 8.3" stroke="#cf3438" stroke-width="1.8"/><path d="M5.2 3.8 H8.4 L5.2 7 Z" fill="#cf3438"/></svg>
<div class="t" style="left:540px;top:337.5px;font-size:12px;font-weight:700;color:#222">日数</div>
<div class="t" style="left:574.5px;top:337.5px;font-size:12px;font-weight:700;color:#4a4a4a">=</div>
<div class="t" style="left:591px;top:338.3px;font-size:12px;color:#7a7a7a">5</div>
<div class="abs" style="left:540px;top:353px;width:247px;height:22px;background:#fff;border:1px solid #cbcbcb"></div>
<div class="t" style="left:544.5px;top:358.6px;font-size:13px;color:#222">5</div>
<svg style="left:768.4px;top:357.3px" width="15.4" height="13.2" viewBox="0 0 15.4 13.2"><rect x="0.5" y="0.5" width="14.4" height="12.2" rx="1.2" fill="#fff" stroke="#c6c6c6" stroke-width="1"/><rect x="5.4" y="6.3" width="9.5" height="6.4" fill="#b9d2ea"/><path d="M5.4 1 V12.4 M10.2 1 V12.4 M1 4 H14.6 M1 8.2 H14.6" stroke="#e3e6ea" stroke-width="0.7"/><rect x="0.3" y="0.3" width="5.7" height="3.6" rx="0.8" fill="#2b70c0"/><path d="M6.4 4.9 L9.6 8.3" stroke="#cf3438" stroke-width="1.8"/><path d="M5.2 3.8 H8.4 L5.2 7 Z" fill="#cf3438"/></svg>
<div class="t" style="left:540px;top:388.5px;font-size:12px;font-weight:700;color:#222">週末</div>
<div class="t" style="left:574.5px;top:388.5px;font-size:12px;font-weight:700;color:#4a4a4a">=</div>
<div class="t" style="left:591px;top:389.3px;font-size:12px;color:#7a7a7a">14</div>
<div class="abs" style="left:540px;top:404px;width:247px;height:22px;background:#fff;border:1px solid #cbcbcb"></div>
<div class="t" style="left:544.5px;top:409.6px;font-size:13px;color:#222">14</div>
<svg style="left:768.4px;top:408.3px" width="15.4" height="13.2" viewBox="0 0 15.4 13.2"><rect x="0.5" y="0.5" width="14.4" height="12.2" rx="1.2" fill="#fff" stroke="#c6c6c6" stroke-width="1"/><rect x="5.4" y="6.3" width="9.5" height="6.4" fill="#b9d2ea"/><path d="M5.4 1 V12.4 M10.2 1 V12.4 M1 4 H14.6 M1 8.2 H14.6" stroke="#e3e6ea" stroke-width="0.7"/><rect x="0.3" y="0.3" width="5.7" height="3.6" rx="0.8" fill="#2b70c0"/><path d="M6.4 4.9 L9.6 8.3" stroke="#cf3438" stroke-width="1.8"/><path d="M5.2 3.8 H8.4 L5.2 7 Z" fill="#cf3438"/></svg>
<div class="t" style="left:540px;top:439.5px;font-size:12px;font-weight:700;color:#222">祭日</div>
<div class="t" style="left:574.5px;top:439.5px;font-size:12px;font-weight:700;color:#4a4a4a">=</div>
<div class="t" style="left:591px;top:440.3px;font-size:12px;color:#7a7a7a">{44138;44158}</div>
<div class="abs" style="left:538px;top:453px;width:251px;height:26.5px;border-radius:3px;background:#6fa4ef"></div>
<div class="abs" style="left:540.5px;top:455.5px;width:246px;height:21.5px;background:#fff"></div>
<div class="t" style="left:544.5px;top:460.6px;font-size:13px;color:#c0283a">A5:A6</div>
<svg style="left:768.4px;top:459.3px" width="15.4" height="13.2" viewBox="0 0 15.4 13.2"><rect x="0.5" y="0.5" width="14.4" height="12.2" rx="1.2" fill="#fff" stroke="#c6c6c6" stroke-width="1"/><rect x="5.4" y="6.3" width="9.5" height="6.4" fill="#b9d2ea"/><path d="M5.4 1 V12.4 M10.2 1 V12.4 M1 4 H14.6 M1 8.2 H14.6" stroke="#e3e6ea" stroke-width="0.7"/><rect x="0.3" y="0.3" width="5.7" height="3.6" rx="0.8" fill="#2b70c0"/><path d="M6.4 4.9 L9.6 8.3" stroke="#cf3438" stroke-width="1.8"/><path d="M5.2 3.8 H8.4 L5.2 7 Z" fill="#cf3438"/></svg>
<div class="t" style="left:541px;top:535px;font-size:11px;color:#444">結果: <span style="font-size:11.6px;color:#222">44162</span></div>
<div class="abs" style="left:766px;top:533px;width:36.5px;height:16.5px;background:#fff;border:1px solid #cdcdcd;border-radius:4px"></div>
<div class="t" style="left:766px;width:36.5px;text-align:center;top:535.5px;font-size:11.5px;color:#222">完了</div>
<div class="abs" style="left:538.5px;top:560px;width:264.5px;height:1px;background:#dcdcdc"></div>
<div class="t" style="left:542.5px;top:571px;font-family:'Liberation Serif',serif;font-style:italic;font-size:20.5px;color:#3c8ad8">fx</div>
<div class="t" style="left:564.5px;top:574.5px;font-size:16px;font-weight:700;color:#222;letter-spacing:-0.05px">WORKDAY.INTL</div>
<div class="t" style="left:544px;top:602.5px;font-size:11px;color:#444">ユーザー定義の週末パラメーターを使用して、指</div>
<div class="t" style="left:544px;top:618.8px;font-size:11px;color:#444">定した日数だけ前あるいは後の日付に対応するシ</div>
<div class="t" style="left:544px;top:635.1px;font-size:11px;color:#444">リアル値を計算します。</div>
<div class="t" style="left:544px;top:661.5px;font-size:13px;font-weight:700;color:#222">構文</div>
<div class="t" style="left:544px;top:688.5px;font-size:11px;color:#222"><span style="font-size:10.5px">WORKDAY.INTL(</span><b>開始日,日数,週末,祭日</b>)</div>
<div class="abs" style="left:795px;top:601px;width:13.5px;height:105px;background:#fafafa;border-left:1px solid #e6e6e6;border-right:1px solid #e6e6e6"></div>
<div class="abs" style="left:798.5px;top:605px;width:7px;height:31px;border-radius:3.5px;background:#c2c2c2"></div>
<div class="t" style="left:679px;top:716.5px;font-size:11.1px;color:#1e6f42;text-decoration:underline">この関数の詳細なヘルプ</div>
<!--/PANEL-->
</div></body></html>
